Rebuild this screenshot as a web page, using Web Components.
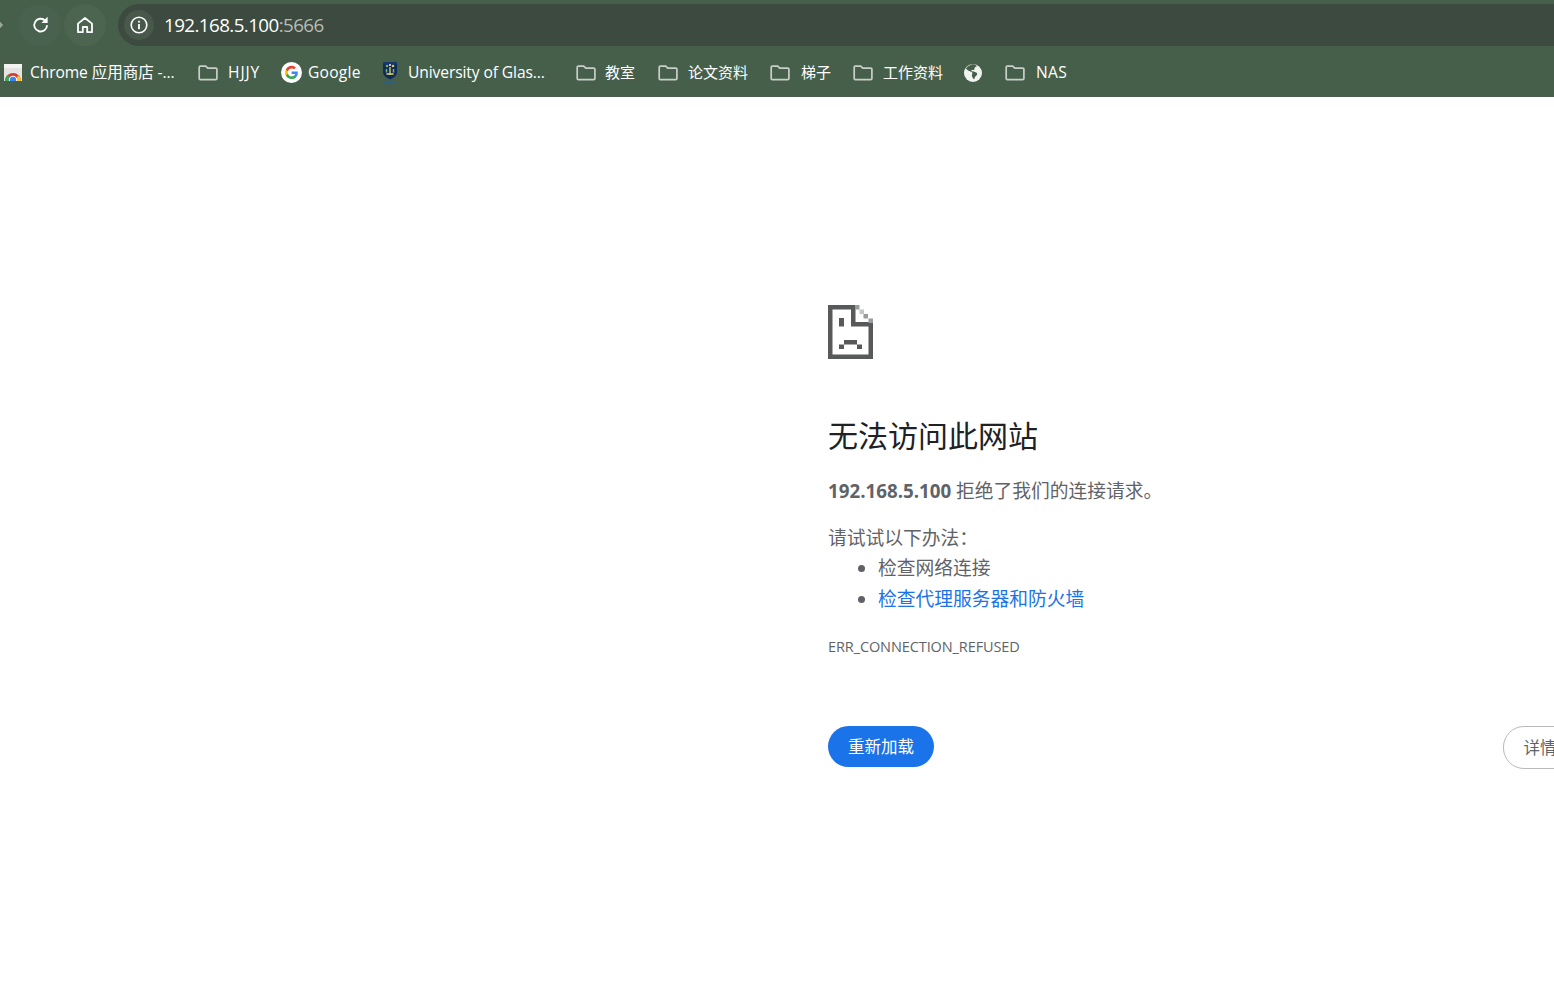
<!DOCTYPE html>
<html lang="zh-CN"><head><meta charset="utf-8"><title>192.168.5.100</title>
<style>
html,body{margin:0;padding:0;height:100%;overflow:hidden;background:#fff;font-family:"Open Sans","Noto Sans CJK SC",sans-serif}
body{display:flex;flex-direction:column;width:1554px;height:985px}
</style></head><body>
<browser-toolbar url-host="192.168.5.100" url-port=":5666"></browser-toolbar>
<bookmark-bar>
  <bookmark-item label="Chrome 应用商店 -..." icon="store" w="175" gap="7"></bookmark-item>
  <bookmark-item label="HJJY" icon="folder" w="85" gap="9" pad="19" ls=".9"></bookmark-item>
  <bookmark-item label="Google" icon="google" w="101" gap="6" pad="18" ls=".25"></bookmark-item>
  <bookmark-item label="University of Glas..." icon="shield" w="185" gap="9" pad="17"></bookmark-item>
  <bookmark-item label="教室" icon="folder" w="90" gap="8" pad="26" cjk></bookmark-item>
  <bookmark-item label="论文资料" icon="folder" w="113" gap="9" pad="18" cjk></bookmark-item>
  <bookmark-item label="梯子" icon="folder" w="83" gap="10" pad="17" cjk></bookmark-item>
  <bookmark-item label="工作资料" icon="folder" w="112" gap="9" pad="17" cjk></bookmark-item>
  <bookmark-item label="" icon="globe" w="41" gap="0" pad="17"></bookmark-item>
  <bookmark-item label="NAS" icon="folder" w="100" gap="10" pad="16" ls=".3"></bookmark-item>
</bookmark-bar>
<error-page></error-page>
<script>
const ICONS={
folder:'<svg width="22" height="18" viewBox="0 0 22 18" fill="none"><path d="M2.200 3.200c0-.6.5-1.100 1.100-1.100h5.400l2 2h8c.7 0 1.200.5 1.200 1.200v9.200c0 .7-.5 1.200-1.200 1.200H3.300c-.6 0-1.100-.5-1.100-1.200z" stroke="#c9cec9" stroke-width="1.700"/></svg>',
google:'<svg width="21" height="21" viewBox="0 0 21 21"><circle cx="10.500" cy="10.500" r="10.500" fill="#fff"/><path d="M16.800 10.700c0-.5 0-.9-.1-1.300h-6.100v2.500h3.500c-.2.800-.6 1.500-1.300 2v1.600h2.100c1.200-1.100 1.900-2.800 1.900-4.800z" fill="#4285f4"/><path d="M10.600 17c1.800 0 3.200-.6 4.300-1.600l-2.100-1.600c-.6.400-1.300.6-2.200.6-1.700 0-3.100-1.100-3.600-2.700H4.800v1.700c1.100 2.100 3.300 3.600 5.800 3.600z" fill="#34a853"/><path d="M7 11.700c-.3-.8-.3-1.700 0-2.500V7.500H4.800c-.9 1.800-.9 4 0 5.900z" fill="#fbbc05"/><path d="M10.600 6.400c.9 0 1.800.3 2.400.9l1.900-1.900C13.800 4.400 12.300 3.800 10.600 3.800c-2.500 0-4.700 1.500-5.800 3.700L7 9.200c.5-1.600 1.900-2.800 3.600-2.800z" fill="#ea4335"/></svg>',
store:'<svg width="20" height="20" viewBox="0 0 20 20"><rect x="1" y="1" width="18" height="17" fill="#e4e4e2"/><rect x="1" y="1" width="18" height="4" fill="#f4f4f2"/><path d="M2 18a8 8 0 0 1 16 0z" fill="#d93a30"/><path d="M2 18a8 8 0 0 1 3-6.300L8 18z" fill="#3aa655"/><path d="M13 18l2-6a8 8 0 0 1 3 6z" fill="#f7c531"/><circle cx="10" cy="17" r="4.200" fill="#fff"/><circle cx="10" cy="17" r="3.200" fill="#3f82ee"/><rect x="0" y="18" width="20" height="2" fill="#465f4b"/></svg>',
shield:'<svg width="18" height="23" viewBox="0 0 18 23"><path d="M2 1h14v10c0 3.500-3 5.500-7 7.500-4-2-7-4-7-7.500z" fill="#0c2c5c"/><path d="M2 1h14v2.500H2z" fill="#16396b"/><circle cx="6" cy="5" r="1.300" fill="#7fae4a"/><circle cx="12" cy="5" r="1.300" fill="#e7c34a"/><circle cx="9" cy="4" r="1.100" fill="#e8e8e8"/><path d="M9 6v8M5.500 13h7" stroke="#e7d268" stroke-width="1.300"/><path d="M5.500 8v3.500M12.500 8v3.500" stroke="#86b24e" stroke-width="1.500"/><path d="M3 21.500h12" stroke="#2d5e86" stroke-width="1.400"/></svg>',
globe:'<svg width="18" height="18" viewBox="0 0 18 18"><circle cx="9" cy="9" r="9" fill="#f1f3f1"/><path d="M7.500.4C6 1.800 3 2 2.200 4.200 1.800 5.300 4 6.200 5.300 7c1.200.700 2.700.500 3 1.900.3 1.200-.7 2-.3 3.300.4 1.100 1.100 2.300 2 3 .8-.8.500-2 1.400-2.800 1-.9 2-1.500 1.700-2.900-.2-.8-1.300-1.100-2.200-1.400-1-.4-1.900-.9-2.800-.7-.7.100-.9-1-.3-1.300.8-.4 1.700.1 2.300-.4.700-.6.100-1.500.800-2.200.6-.6 1.500-.7 2-1.400C11.500.300 9.500 0 7.500.4z" fill="#465f4b"/></svg>',
};
function def(name,css,html){customElements.define(name,class extends HTMLElement{connectedCallback(){if(this.shadowRoot)return;const r=this.attachShadow({mode:'open'});r.innerHTML='<style>'+css+'</style>'+html(this)}})}

def('browser-toolbar',`
:host{display:flex;align-items:stretch;height:46px;background:#465f4b;color:#fff;flex:none;overflow:hidden;box-sizing:border-box;padding-top:4px}
.row{display:flex;align-items:center;height:42px;width:100%}
.tip{width:4px;height:12px;flex:none;margin-right:15px;display:flex;align-items:center}
.btn{width:42px;height:42px;border-radius:50%;display:flex;align-items:center;justify-content:center;flex:none}
.reload{background:#496250;margin-right:3px;padding-left:2px;box-sizing:border-box}
.home{background:#4c6551;margin-right:12px}
.bar{flex:1;height:42px;border-radius:21px 0 0 21px;background:#3d4a3f;display:flex;align-items:center;padding-left:6px;margin-right:-20px;min-width:0}
.chip{width:30px;height:30px;border-radius:50%;background:#48594a;display:flex;align-items:center;justify-content:center;flex:none;margin-right:10px}
.url{font:18.800px/1 "Open Sans",sans-serif;letter-spacing:-.58px;color:#fff;white-space:nowrap}
.url span{color:#b6bcb6}
`,h=>`<div class="row">
<div class="tip"><svg width="4" height="12" viewBox="0 0 4 12"><path d="M0 2.800L3.200 6 0 9.200z" fill="#9ba89e"/></svg></div>
<div class="btn reload"><svg width="22" height="22" viewBox="0 0 20 20" fill="none"><path d="M15.500 10.200a5.800 5.800 0 1 1-1.700-4.200" stroke="#fff" stroke-width="1.700"/><path d="M16 2.600v5.600h-5.600z" fill="#fff"/></svg></div>
<div class="btn home"><svg width="20" height="20" viewBox="0 0 20 20" fill="none"><path d="M3 8.600L10 3l7 5.600v8.600h-4.800v-5.200H7.800v5.200H3z" stroke="#fff" stroke-width="1.800" stroke-linejoin="round"/></svg></div>
<div class="bar"><div class="chip"><svg width="20" height="20" viewBox="0 0 20 20" fill="none"><circle cx="10" cy="10" r="7.800" stroke="#fff" stroke-width="1.600"/><rect x="9.100" y="9" width="1.800" height="5.200" fill="#fff"/><rect x="9.100" y="5.800" width="1.800" height="1.800" fill="#fff"/></svg></div>
<div class="url">${h.getAttribute('url-host')}<span>${h.getAttribute('url-port')}</span></div></div>
</div>`);

def('bookmark-bar',`:host{display:flex;align-items:center;height:51px;background:#465f4b;flex:none;padding-left:3px;box-sizing:border-box;overflow:hidden}`,()=>`<slot></slot>`);

def('bookmark-item',`
:host{display:flex;align-items:center;flex:none;height:51px;box-sizing:border-box;padding-top:2px;color:#fff;font:15.600px/1 "Open Sans","Noto Sans CJK SC",sans-serif;white-space:nowrap;letter-spacing:-.1px}
.i{display:flex;flex:none}
.c{font-size:15px;letter-spacing:0}
`,h=>{
 h.style.width=h.getAttribute('w')+'px';
 h.style.paddingLeft=(h.getAttribute('pad')||0)+'px';
 if(h.hasAttribute('ls'))h.style.letterSpacing=h.getAttribute('ls')+'px';
 const lab=h.getAttribute('label');
 return `<span class="i" style="margin-right:${h.getAttribute('gap')}px">${ICONS[h.getAttribute('icon')]}</span>${lab?`<span class="${h.hasAttribute('cjk')?'c':''}">${lab}</span>`:''}`;
});

def('error-page',`
:host{display:block;flex:1;background:#fff;overflow:hidden;padding:208px 0 0 828px;color:#5f6368;font:18.750px/30px "Open Sans","Noto Sans CJK SC",sans-serif;min-height:0}
.wrap{width:800px}
svg{display:block}
h1{margin:51px 0 0;height:48px;font:400 30px/48px "Noto Sans CJK SC","Open Sans",sans-serif;color:#202124}
p{margin:0}
.reason{margin-top:15px;height:36px;line-height:36px}
.reason b{font-weight:700}
.try{margin-top:14px}
ul{margin:0;padding:0 0 0 50px}
li{height:30.500px}
a{color:#1a73e8;text-decoration:none}
.code{margin-top:21px;height:24px;font-size:14.500px;line-height:24px;letter-spacing:-.1px}
.btns{margin-top:67px;display:flex;justify-content:space-between;align-items:flex-start;width:749px}
.btn{box-sizing:border-box;border-radius:21px;font:16.500px/1 "Open Sans","Noto Sans CJK SC",sans-serif;display:flex;align-items:center;justify-content:center;padding-top:1px;white-space:nowrap}
.primary{width:106px;height:41px;background:#1a73e8;color:#fff}
.secondary{width:74px;height:43px;border:1px solid #b8babd;color:#5f6368;background:#fff}
`,()=>`<div class="wrap">
<svg width="45" height="54" viewBox="0 0 45 54" fill="#58595b">
<path fill-rule="evenodd" d="M0 0H27V4.500H4.500V49.500H40.500V18H45V54H0z"/>
<path d="M23 4h4.500V17H45V21.500H23z"/>
<path d="M27 0h4.500v4.500H27zM35.500 9H40v4.500h-4.500zM40.500 13.500H45V18h-4.500z" fill="#9a9b9d"/>
<path d="M31.500 4.500H36V9h-4.500z" fill="#c4c5c6"/>
<path d="M11 13h5v8.500h-5z"/>
<path d="M16 35h13v4.500H16zM11 39.500h5V44h-5zM29 39.500h5V44h-5z"/>
</svg>
<h1>无法访问此网站</h1>
<p class="reason"><b>192.168.5.100</b> 拒绝了我们的连接请求。</p>
<p class="try">请试试以下办法：</p>
<ul><li>检查网络连接</li><li><a href="#">检查代理服务器和防火墙</a></li></ul>
<div class="code">ERR_CONNECTION_REFUSED</div>
<div class="btns"><div class="btn primary">重新加载</div><div class="btn secondary">详情</div></div>
</div>`);
</script>
</body></html>
